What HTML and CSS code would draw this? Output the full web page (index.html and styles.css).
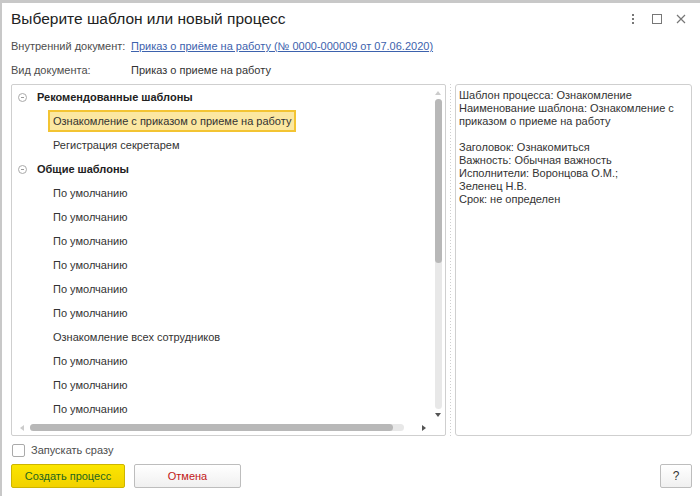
FILE: index.html
```html
<!DOCTYPE html>
<html lang="ru">
<head>
    <meta charset="UTF-8">
    <meta name="viewport" content="width=device-width, initial-scale=1.0">
    <title>Выберите шаблон или новый процесс</title>
    <link rel="stylesheet" href="styles.css">
</head>
<body>
    <div class="window">
        <div class="titlebar">
            <h1>Выберите шаблон или новый процесс</h1>
            <div class="win-buttons">
                <svg width="12" height="12" viewBox="0 0 12 12"><rect x="5" y="1" width="2" height="2" fill="#777"/><rect x="5" y="5" width="2" height="2" fill="#777"/><rect x="5" y="9" width="2" height="2" fill="#777"/></svg>
                <svg width="12" height="12" viewBox="0 0 12 12"><rect x="1.5" y="1.5" width="9" height="9" fill="none" stroke="#777" stroke-width="1"/></svg>
                <svg width="12" height="12" viewBox="0 0 12 12"><path d="M2 2 L10 10 M10 2 L2 10" stroke="#777" stroke-width="1.2"/></svg>
            </div>
        </div>

        <div class="field-row">
            <span class="field-label">Внутренний документ:</span>
            <a href="#" class="field-link">Приказ о приёме на работу (№ 0000-000009 от 07.06.2020)</a>
        </div>
        <div class="field-row">
            <span class="field-label">Вид документа:</span>
            <span class="field-value">Приказ о приеме на работу</span>
        </div>

        <div class="main">
            <div class="tree-panel">
                <div class="tree-body">
                    <ul class="tree">
                        <li class="group"><span class="toggle"></span>Рекомендованные шаблоны</li>
                        <li class="item"><span class="selected">Ознакомление с приказом о приеме на работу</span></li>
                        <li class="item"><span>Регистрация секретарем</span></li>
                        <li class="group"><span class="toggle"></span>Общие шаблоны</li>
                        <li class="item"><span>По умолчанию</span></li>
                        <li class="item"><span>По умолчанию</span></li>
                        <li class="item"><span>По умолчанию</span></li>
                        <li class="item"><span>По умолчанию</span></li>
                        <li class="item"><span>По умолчанию</span></li>
                        <li class="item"><span>По умолчанию</span></li>
                        <li class="item"><span>Ознакомление всех сотрудников</span></li>
                        <li class="item"><span>По умолчанию</span></li>
                        <li class="item"><span>По умолчанию</span></li>
                        <li class="item"><span>По умолчанию</span></li>
                    </ul>
                    <div class="vscroll">
                        <span class="arrow-up"></span>
                        <div class="vtrack"><div class="vthumb"></div></div>
                        <span class="arrow-down"></span>
                    </div>
                </div>
                <div class="hscroll">
                    <span class="arrow-left"></span>
                    <div class="htrack"><div class="hthumb"></div></div>
                    <span class="arrow-right"></span>
                </div>
            </div>
            <div class="splitter"></div>
            <div class="info-panel">
                Шаблон процесса: Ознакомление<br>
                Наименование шаблона: Ознакомление с приказом о приеме на работу<br>
                <br>
                Заголовок: Ознакомиться<br>
                Важность: Обычная важность<br>
                Исполнители: Воронцова О.М.;<br>
                Зеленец Н.В.<br>
                Срок: не определен
            </div>
        </div>

        <label class="check-row">
            <span class="checkbox"></span>
            Запускать сразу
        </label>

        <div class="footer">
            <button class="btn btn-primary">Создать процесс</button>
            <button class="btn btn-cancel">Отмена</button>
            <button class="btn btn-help">?</button>
        </div>
    </div>
</body>
</html>
```

FILE: styles.css
```css
body {
    font-family: 'Liberation Sans', Arial, sans-serif;
    margin: 0;
    padding: 0;
    background-color: #fff;
    color: #333;
    font-size: 11px;
}
.window {
    width: 700px;
    height: 496px;
    box-sizing: border-box;
    border-top: 3px solid #c8c8c8;
    border-left: 2px solid #c8c8c8;
    padding: 0 9px 0 9px;
    display: flex;
    flex-direction: column;
}
.titlebar {
    display: flex;
    align-items: center;
    justify-content: space-between;
    height: 31px;
}
.titlebar h1 {
    margin: 0;
    font-size: 15.5px;
    font-weight: normal;
    color: #222;
}
.win-buttons {
    display: flex;
    gap: 12px;
    margin-right: 4px;
}
.field-row {
    display: flex;
    align-items: center;
    height: 24px;
}
.field-label {
    width: 120px;
    color: #4d4d4d;
}
.field-link {
    color: #3d62ad;
}
.field-value {
    color: #333;
}
.main {
    display: flex;
    margin-top: 2px;
    height: 352px;
}
.tree-panel {
    width: 435px;
    box-sizing: border-box;
    border: 1px solid #cfcfcf;
    border-radius: 2px;
    display: flex;
    flex-direction: column;
}
.tree-body {
    flex: 1;
    display: flex;
    min-height: 0;
}
.tree {
    flex: 1;
    list-style: none;
    margin: 0;
    padding: 0;
}
.tree li {
    height: 24px;
    display: flex;
    align-items: center;
    white-space: nowrap;
}
.tree .group {
    font-weight: bold;
    color: #222;
    padding-left: 6px;
}
.toggle {
    width: 7px;
    height: 7px;
    border: 1px solid #aaa;
    border-radius: 50%;
    margin-right: 10px;
    position: relative;
}
.toggle::after {
    content: "";
    position: absolute;
    left: 2px;
    top: 3px;
    width: 3px;
    height: 1px;
    background: #999;
}
.tree .item {
    padding-left: 36px;
    color: #333;
}
.tree .item span {
    padding: 3px 3px;
    border: 2px solid transparent;
}
.tree .item .selected {
    background: #fbe7a1;
    border-color: #f3c433;
}
.vscroll {
    width: 14px;
    display: flex;
    flex-direction: column;
    align-items: center;
    padding: 6px 0 4px;
}
.arrow-up, .arrow-down {
    width: 0;
    height: 0;
    border-left: 3px solid transparent;
    border-right: 3px solid transparent;
}
.arrow-up {
    border-bottom: 4px solid #ccc;
}
.arrow-down {
    border-top: 4px solid #555;
    margin-top: 4px;
}
.vtrack {
    flex: 1;
    width: 7px;
    margin-top: 4px;
    background: #e8e8e8;
    border-radius: 4px;
}
.vthumb {
    height: 164px;
    background: #b8b8b8;
    border-radius: 4px;
}
.hscroll {
    height: 13px;
    display: flex;
    align-items: center;
    padding: 0 19px 1px 8px;
}
.arrow-left, .arrow-right {
    width: 0;
    height: 0;
    border-top: 3px solid transparent;
    border-bottom: 3px solid transparent;
}
.arrow-left {
    border-right: 4px solid #ccc;
}
.arrow-right {
    border-left: 4px solid #555;
    margin-left: 18px;
}
.htrack {
    flex: 1;
    height: 7px;
    margin-left: 6px;
    background: #e8e8e8;
    border-radius: 4px;
}
.hthumb {
    width: 363px;
    height: 7px;
    background: #b8b8b8;
    border-radius: 4px;
}
.splitter {
    width: 9px;
    background: linear-gradient(#d0d0d0 50%, transparent 50%) 4px 0 / 1px 3px repeat-y;
}
.info-panel {
    flex: 1;
    box-sizing: border-box;
    border: 1px solid #cfcfcf;
    border-radius: 3px;
    padding: 4px 3px;
    line-height: 13px;
    color: #333;
    margin-right: -1px;
}
.check-row {
    display: flex;
    align-items: center;
    height: 28px;
    margin-left: 1px;
    color: #4d4d4d;
}
.checkbox {
    width: 11px;
    height: 11px;
    border: 1px solid #aaa;
    border-radius: 2px;
    margin-right: 6px;
}
.footer {
    display: flex;
    gap: 9px;
}
.btn {
    height: 24px;
    font-family: 'Liberation Sans', Arial, sans-serif;
    font-size: 11px;
    border-radius: 2px;
    cursor: pointer;
}
.btn-primary {
    width: 114px;
    background: linear-gradient(#fbe600, #f2d100);
    border: 1px solid #cdb500;
    color: #1f661f;
}
.btn-cancel {
    width: 107px;
    background: linear-gradient(#fff, #f0f0f0);
    border: 1px solid #bdbdbd;
    color: #c21818;
}
.btn-help {
    width: 32px;
    margin-left: auto;
    background: linear-gradient(#fff, #f0f0f0);
    border: 1px solid #bdbdbd;
    color: #333;
    font-size: 12px;
    margin-right: -1px;
}
```
